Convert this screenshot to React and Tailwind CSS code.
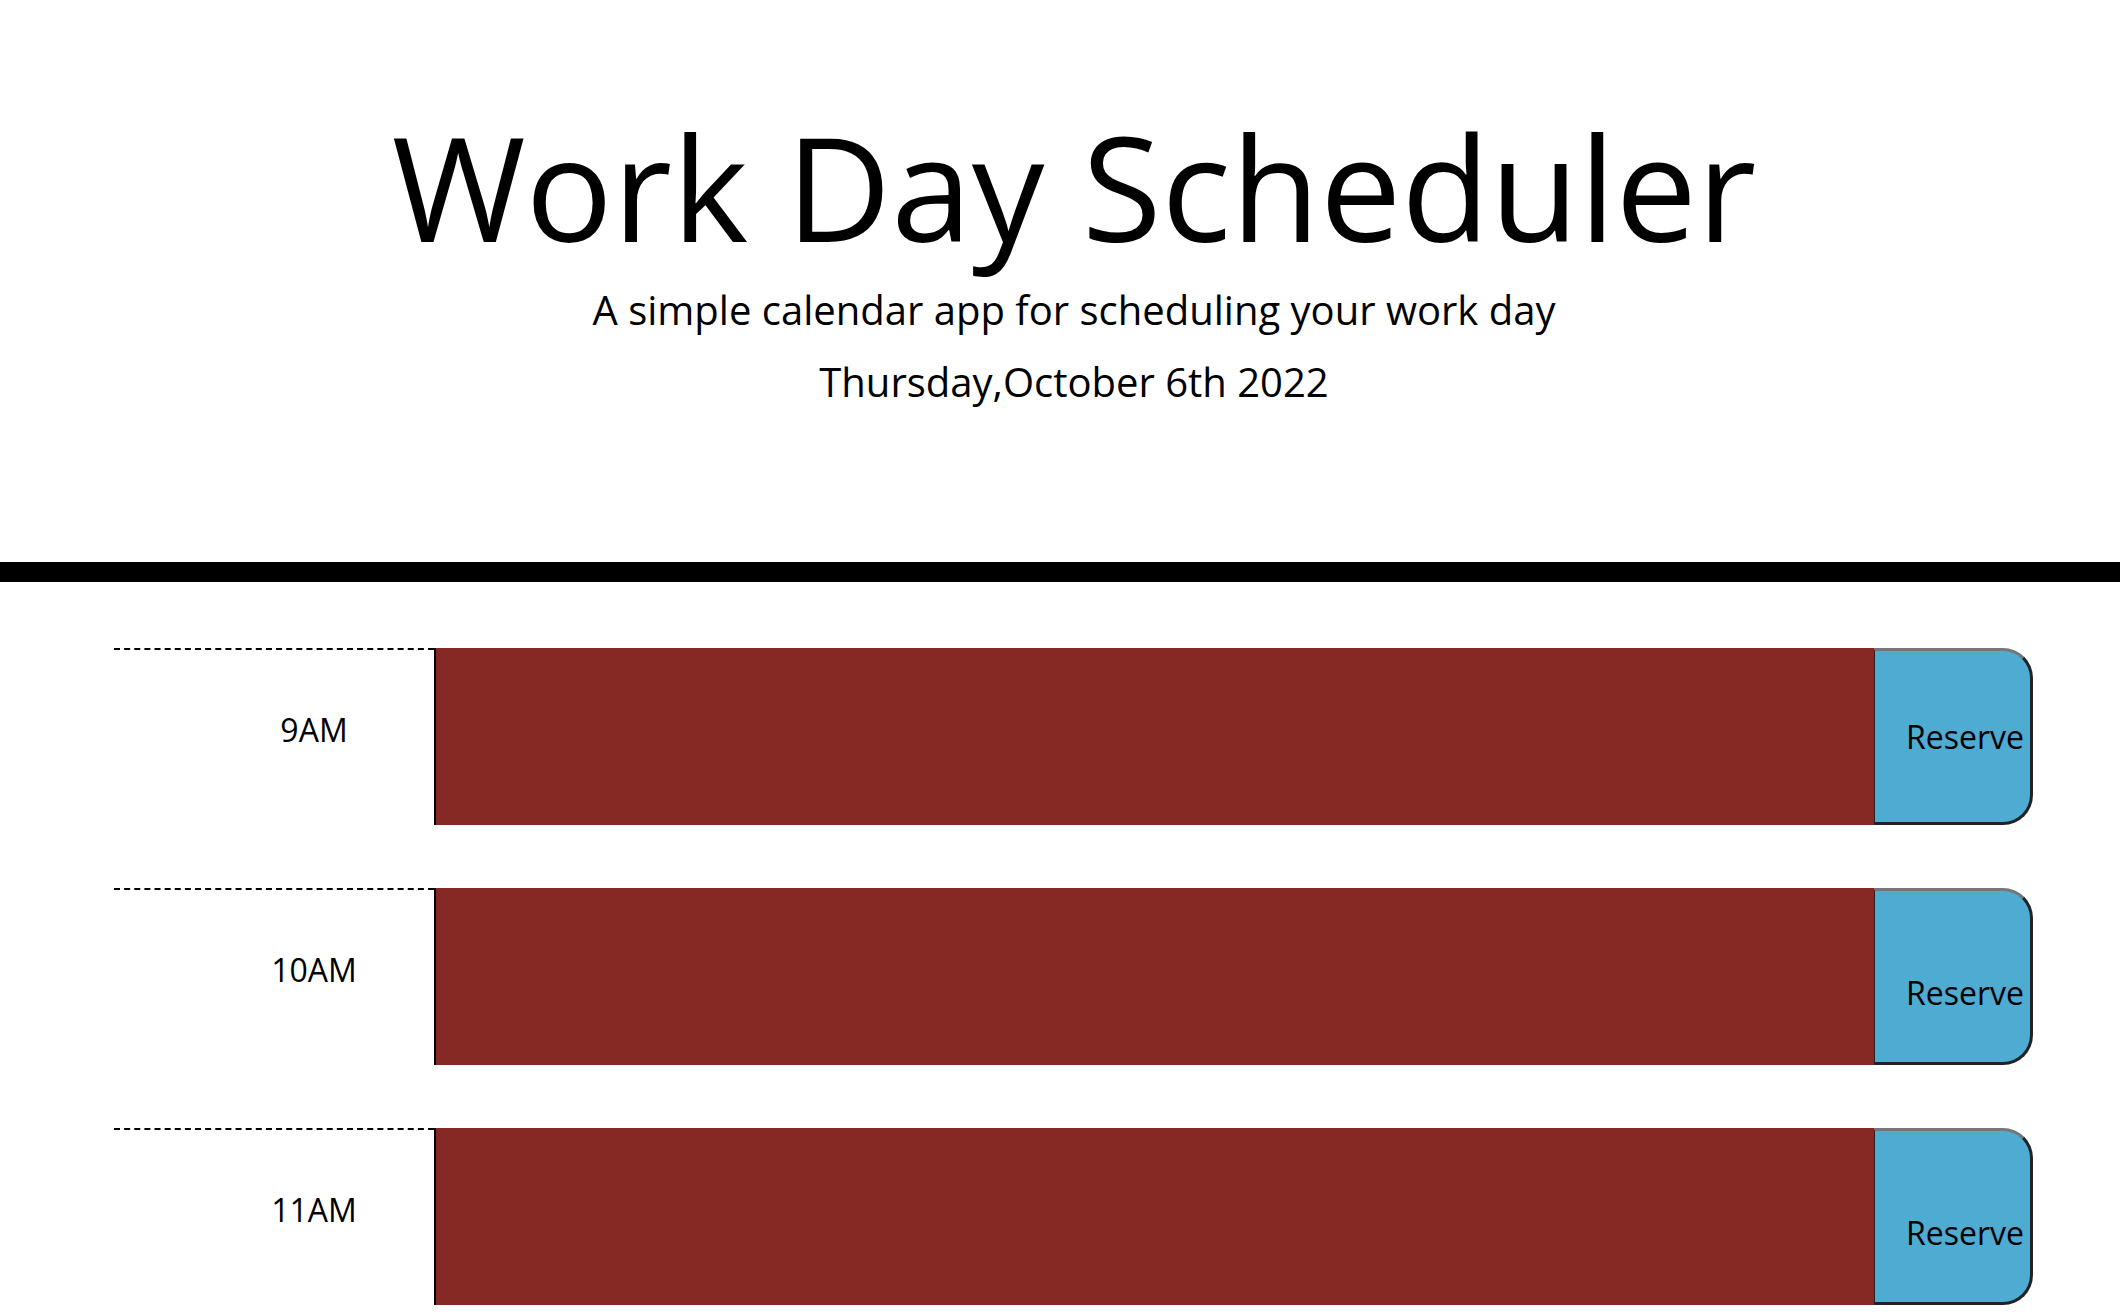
import React from "react";

const hours = [
  { label: "9AM", btnPad: "pt-[70px]" },
  { label: "10AM", btnPad: "pt-[86px]" },
  { label: "11AM", btnPad: "pt-[86px]" },
];

function TimeBlock({ label, btnPad }) {
  return (
    <div className="flex h-[177px]">
      <div className="w-[320px] border-t-2 border-dashed border-black flex items-center justify-center pl-[80px] pb-[15px]">
        <span className="text-[32px] leading-none">{label}</span>
      </div>
      <textarea className="w-[1440px] h-full bg-[#862823] border-l-2 border-black resize-none outline-none" />
      <button
        className={`w-[159px] h-full bg-[#4eabd2] border-t-[3px] border-r-[3px] border-b-[3px] border-l border-t-[#777777] border-r-[#222222] border-b-[#222222] border-l-[#222222] rounded-r-[30px] flex items-start pl-[31px] ${btnPad}`}
      >
        <span className="text-[32px] leading-none text-black">Reserve</span>
      </button>
    </div>
  );
}

export default function App() {
  return (
    <div className="min-h-screen bg-white text-black font-['Open_Sans',sans-serif]">
      <header className="flex flex-col items-center pt-[113px] pl-[28px]">
        <h1 className="text-[145px] leading-none">Work Day Scheduler</h1>
        <p className="text-[40px] leading-none mt-[32px]">
          A simple calendar app for scheduling your work day
        </p>
        <p className="text-[40px] leading-none mt-[32px]">Thursday,October 6th 2022</p>
      </header>

      <div className="h-[20px] bg-black mt-[160px]" />

      <div className="pl-[114px] pt-[66px] flex flex-col gap-[63px]">
        {hours.map((h) => (
          <TimeBlock key={h.label} {...h} />
        ))}
      </div>
    </div>
  );
}
